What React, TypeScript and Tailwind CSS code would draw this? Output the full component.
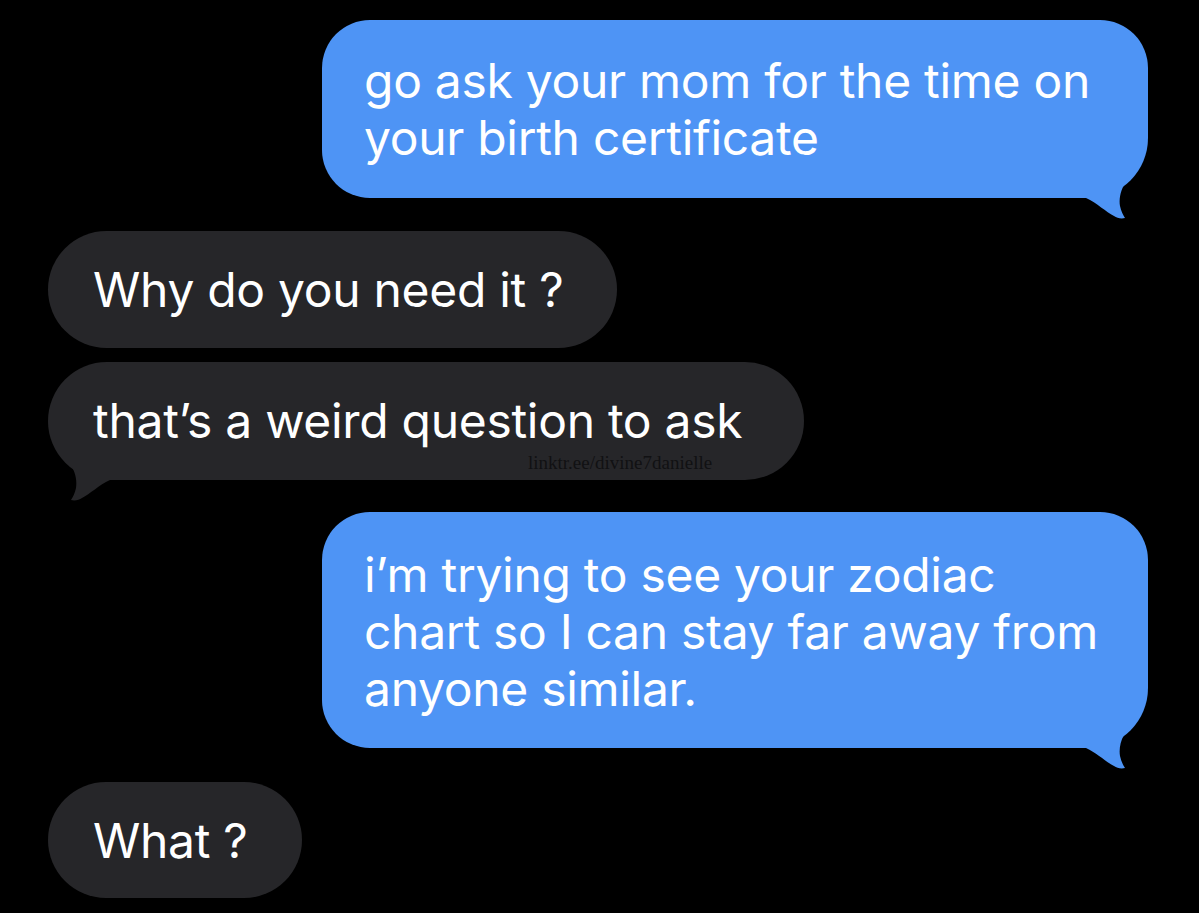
import React from "react";

const font = { fontFamily: "Inter, 'Noto Sans', sans-serif" };

function Tail({ color, side }: { color: string; side: "left" | "right" }) {
  return (
    <svg
      viewBox="0 0 62 72"
      className={
        side === "right"
          ? "absolute right-0 bottom-[-22px] w-[62px] h-[72px]"
          : "absolute left-0 bottom-[-22px] w-[62px] h-[72px] -scale-x-100"
      }
    >
      <path
        d="M0,30 L38,30 L38,37 C34,44 33,52 34,58 C35,63 37,67 39,70 C35,71 31,70 28,68 C20,64 11,55 0,50 Z"
        fill={color}
      />
    </svg>
  );
}

const BLUE = "#4e94f5";
const GRAY = "#262629";

export default function App() {
  return (
    <div
      className="w-[1199px] h-[913px] bg-black flex flex-col overflow-hidden text-white text-[48px] leading-[57px] tracking-[-0.3px]"
      style={font}
    >
      <div className="mt-[20px] self-end mr-[51px] relative">
        <div className="w-[826px] h-[178px] bg-[#4e94f5] rounded-[48px] rounded-br-[60px] pl-[42px] pt-[32px]">
          go ask your mom for the time on
          <br />
          your birth certificate
        </div>
        <Tail color={BLUE} side="right" />
      </div>

      <div className="mt-[33px] ml-[48px] w-[569px] h-[117px] bg-[#262629] rounded-full pl-[45px] pt-[30px]">
        Why do you need it ?
      </div>

      <div className="mt-[14px] ml-[48px] relative self-start">
        <div className="w-[756px] h-[118px] bg-[#262629] rounded-full pl-[45px] pt-[30px]">
          that’s a weird question to ask
        </div>
        <span
          className="absolute left-[480px] top-[90px] text-[19px] leading-[22px] tracking-normal text-[#111113]"
          style={{ fontFamily: "'Liberation Serif', serif" }}
        >
          linktr.ee/divine7danielle
        </span>
        <Tail color={GRAY} side="left" />
      </div>

      <div className="mt-[32px] self-end mr-[51px] relative">
        <div className="w-[826px] h-[236px] bg-[#4e94f5] rounded-[48px] rounded-br-[60px] pl-[42px] pt-[34px]">
          i’m trying to see your zodiac
          <br />
          chart so I can stay far away from
          <br />
          anyone similar.
        </div>
        <Tail color={BLUE} side="right" />
      </div>

      <div className="mt-[34px] ml-[48px] w-[254px] h-[116px] bg-[#262629] rounded-full pl-[45px] pt-[30px]">
        What ?
      </div>
    </div>
  );
}
